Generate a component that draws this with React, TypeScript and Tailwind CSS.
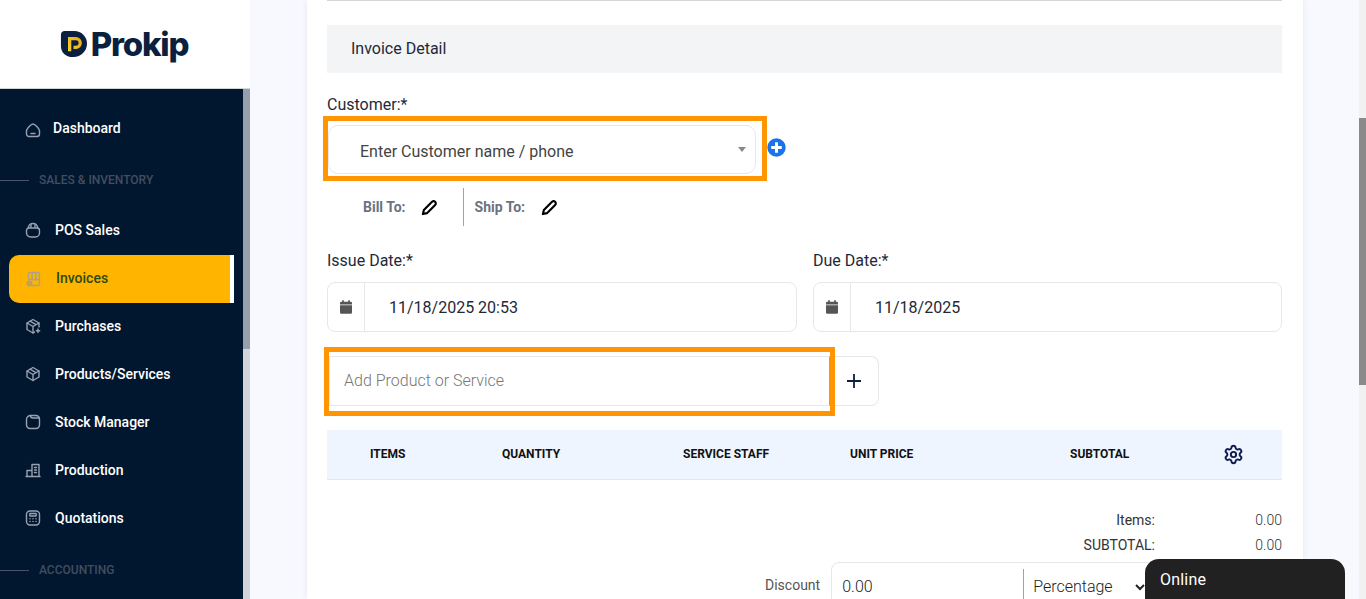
import React from "react";
import { Settings } from "lucide-react";

const Ico = ({ children, cls = "" }: { children: React.ReactNode; cls?: string }) => (
  <svg viewBox="0 0 16 16" fill="none" stroke="currentColor" strokeWidth="1.4" strokeLinecap="round" strokeLinejoin="round" className={"w-[16px] h-[16px] shrink-0 " + cls}>
    {children}
  </svg>
);

const Home = () => <Ico cls="w-[15px] h-[15px]"><path d="M1.500 8.500C2 6.500 6 2 8 2s6 4.500 6.500 6.500V12a2.500 2.500 0 0 1-2.500 2.500H4A2.500 2.500 0 0 1 1.500 12Z" /><path d="M6 11.500h4" /></Ico>;
const Pos = () => <Ico><path d="M1.500 8.500a2.500 2.500 0 0 1 2.500-2.500h8a2.500 2.500 0 0 1 2.500 2.500V11a4 4 0 0 1-4 4h-5a4 4 0 0 1-4-4Z" /><path d="M3 6.500C3.500 3.500 5.500 1.500 8 1.500s4.500 2 5 5" /><path d="M6 5.500V2.500M10 5.500V2.500" /></Ico>;
const Store = () => <Ico><path d="M2.500 7V3.500a2 2 0 0 1 2-2h7a2 2 0 0 1 2 2V7a1.800 1.800 0 0 1-3.600 0 1.800 1.800 0 0 1-3.800 0 1.800 1.800 0 0 1-3.600 0Z" /><path d="M6.100 1.500V7M9.900 1.500V7" /><path d="M13.500 8.500V12.500a2 2 0 0 1-2 2H6" /><circle cx="3.500" cy="12.500" r="2.300" /><path d="M3.500 11.500v2M2.500 12.500h2" /></Ico>;
const BoxPlus = () => <Ico><path d="M14 9V5L8 1.500 2 5v6.500L8 15l1.500-.9" /><path d="M2 5l6 3.500L14 5M8 8.500V15M5 3.200l6 3.500" /><path d="M13 11v3.500M11.300 12.700h3.400" /></Ico>;
const Box = () => <Ico><path d="M14 11V5L8 1.500 2 5v6l6 3.500Z" /><path d="M2 5l6 3.500L14 5M8 8.500v6M5 3.200l6 3.500" /></Ico>;
const Folder = () => <Ico><path d="M1.500 5.500A4 4 0 0 1 5.500 1.500H11a3.500 3.500 0 0 1 3.500 3.500v6a3.500 3.500 0 0 1-3.500 3.500H5a3.500 3.500 0 0 1-3.500-3.500Z" /><path d="M5.500 1.500c0 1.500 1 2.500 2.500 2.500h6.300" /></Ico>;
const Factory = () => <Ico><path d="M1 14.500h14M2 14.500V8.500h5v6M7 14.500V2.500h7v12" /><path d="M9.500 5.500h2M9.500 8h2M9.500 10.500h2" /></Ico>;
const Calc = () => <Ico><rect x="1.500" y="1" width="13" height="14" rx="3.500" /><rect x="4.800" y="3.500" width="6.400" height="2.500" rx=".5" /><path d="M5 8.800h.01M8 8.800h.01M11 8.800h.01M5 11.500h.01M8 11.500h.01M11 11.500h.01" strokeWidth="1.500" /></Ico>;

const Item = ({ icon, label }: { icon: React.ReactNode; label: string }) => (
  <div className="flex items-center pl-[25px] text-[#99a1b0] h-[48px]">
    {icon}
    <span className="ml-[14px] text-[14px] font-medium text-white leading-none">{label}</span>
  </div>
);

const Section = ({ label }: { label: string }) => (
  <div className="flex items-center h-[22px]">
    <div className="w-[29px] h-px bg-[#4a5568]" />
    <span className="ml-[10px] text-[12px] font-medium text-[#434d5f] leading-none">{label}</span>
  </div>
);

const Pencil = () => (
  <svg viewBox="0 0 16 16" className="w-[17px] h-[17px]" fill="none" stroke="#000" strokeWidth="2" strokeLinejoin="round" strokeLinecap="round">
    <path d="M1.800 14.200l.9-3.800 7.700-7.700a2 2 0 0 1 2.900 2.900l-7.700 7.700Z" />
  </svg>
);

const CalIcon = () => (
  <svg viewBox="0 0 448 512" className="w-[12px] h-[14px]" fill="#555">
    <path d="M96 0h32a16 16 0 0 1 16 16v48h160V16a16 16 0 0 1 16-16h32a16 16 0 0 1 16 16v48h32a48 48 0 0 1 48 48v48H0v-48a48 48 0 0 1 48-48h32V16A16 16 0 0 1 96 0ZM0 192h448v272a48 48 0 0 1-48 48H48a48 48 0 0 1-48-48Z" />
  </svg>
);

const Sidebar = () => (
  <aside className="w-[250px] shrink-0 h-full flex flex-col">
    <div className="h-[89px] bg-white border-b border-[#d4d6db] flex items-center justify-center shrink-0">
      <div className="flex items-center mt-[1px] ml-[-2px]">
        <svg viewBox="0 0 28 28" className="w-[27px] h-[27px] mt-[-3px]">
          <defs>
            <linearGradient id="pg" x1="0" y1="1" x2="1" y2="0">
              <stop offset="0" stopColor="#f2d22e" />
              <stop offset="1" stopColor="#f0a818" />
            </linearGradient>
          </defs>
          <path d="M5 1h10a13 13 0 0 1 13 13v0a14 14 0 0 1-14 14h-1C6 28 1 23 1 17V5a4 4 0 0 1 4-4Z" fill="#0b1f3f" />
          <path d="M10 22V9h6.500a4 4 0 0 1 0 9H14" fill="none" stroke="url(#pg)" strokeWidth="3.400" />
        </svg>
        <span className="ml-[4px] text-[33px] leading-none font-extrabold text-[#0b1f3f] tracking-[-1.2px]" style={{ fontFamily: "Inter, sans-serif" }}>Prokip</span>
      </div>
    </div>
    <div className="flex-1 flex min-h-0">
      <nav className="w-[243px] bg-[#00172f] overflow-hidden">
        <div className="h-[80px] flex items-center pl-[25px] text-[#99a1b0]">
          <span className="mt-[2px]"><Home /></span>
          <span className="ml-[12px] mt-[-2px] text-[14px] font-medium text-white leading-none">Dashboard</span>
        </div>
        <Section label="SALES & INVENTORY" />
        <div className="h-[15px]" />
        <Item icon={<Pos />} label="POS Sales" />
        <div className="mt-px mb-[-1px] ml-[9px] w-[225px] h-[48px] bg-[#ffb500] rounded-l-[10px] border-r-[4px] border-white flex items-center pl-[17px] text-[#a8a090]">
          <Store />
          <span className="ml-[14px] mt-[-2px] text-[14px] font-medium text-[#2d4a10] leading-none">Invoices</span>
        </div>
        <Item icon={<BoxPlus />} label="Purchases" />
        <Item icon={<Box />} label="Products/Services" />
        <Item icon={<Folder />} label="Stock Manager" />
        <Item icon={<Factory />} label="Production" />
        <Item icon={<Calc />} label="Quotations" />
        <div className="h-[17px]" />
        <Section label="ACCOUNTING" />
      </nav>
      <div className="w-[7px] bg-[#d2d4da]">
        <div className="h-[260px] bg-[#989eab]" />
      </div>
    </div>
  </aside>
);

const Th = ({ w, children }: { w: string; children: React.ReactNode }) => (
  <div className={"text-[12px] font-bold text-[#111] mt-[-1px] " + w}>{children}</div>
);

export default function App() {
  return (
    <div className="w-[1366px] h-[599px] overflow-hidden flex bg-[#f8f9ff] relative" style={{ fontFamily: "Roboto, sans-serif" }}>
      <Sidebar />
      <main className="flex-1 min-w-0 pl-[57px] pr-[63px]">
        <section className="bg-white h-full pl-[20px] pr-[21px] shadow-[0_0_6px_rgba(60,70,140,0.10)]">
          <div className="h-px bg-[#d5d6da]" />
          <div className="mt-[24px] h-[48px] bg-[#f3f4f6] flex items-center pl-[24px] text-[16px] text-[#1f2937]">Invoice Detail</div>

          <div className="mt-[22px] text-[16px] leading-[19px] text-[#1f2937]">Customer:*</div>
          <div className="flex items-start mt-[2px] ml-[-4px]">
            <div className="w-[444px] h-[65px] border-[5px] border-[#ff9500] flex">
              <div className="flex-1 mt-[4px] mb-[2px] mr-[6px] border border-[#e5e7eb] rounded-[10px] flex items-center pl-[31px] pr-[9px] text-[16px] text-[#444]">
                <span className="flex-1 mt-[4px]">Enter Customer name / phone</span>
                <span className="w-0 h-0 border-x-[4px] border-x-transparent border-t-[5px] border-t-[#888]" />
              </div>
            </div>
            <svg viewBox="0 0 512 512" className="w-[19px] h-[19px] mt-[22px]" fill="#1a73e8">
              <path d="M256 8a248 248 0 1 0 0 496 248 248 0 0 0 0-496Zm144 276a12 12 0 0 1-12 12h-92v92a12 12 0 0 1-12 12h-56a12 12 0 0 1-12-12v-92h-92a12 12 0 0 1-12-12v-56a12 12 0 0 1 12-12h92v-92a12 12 0 0 1 12-12h56a12 12 0 0 1 12 12v92h92a12 12 0 0 1 12 12Z" />
            </svg>
          </div>
          <div className="flex items-center h-[38px] mt-[7px] text-[14px] font-bold text-[#6b7280]">
            <span className="ml-[36px] leading-none">Bill To:</span>
            <span className="ml-[15px]"><Pencil /></span>
            <span className="ml-[25px] w-px h-[38px] bg-[#9ca3af]" />
            <span className="ml-[11px] leading-none">Ship To:</span>
            <span className="ml-[16px]"><Pencil /></span>
          </div>

          <div className="mt-[25px] flex">
            <div className="w-[470px]">
              <div className="text-[16px] leading-[19px] text-[#1f2937]">Issue Date:*</div>
              <div className="mt-[12px] h-[50px] border border-[#e5e7eb] rounded-[8px] flex items-center">
                <div className="w-[37px] h-full border-r border-[#e5e7eb] flex items-center justify-center"><CalIcon /></div>
                <span className="ml-[24px] mt-[2px] text-[16px] text-[#1f2937]">11/18/2025 20:53</span>
              </div>
            </div>
            <div className="ml-[16px] w-[469px]">
              <div className="text-[16px] leading-[19px] text-[#1f2937]">Due Date:*</div>
              <div className="mt-[12px] h-[50px] border border-[#e5e7eb] rounded-[8px] flex items-center">
                <div className="w-[37px] h-full border-r border-[#e5e7eb] flex items-center justify-center"><CalIcon /></div>
                <span className="ml-[24px] mt-[2px] text-[16px] text-[#1f2937]">11/18/2025</span>
              </div>
            </div>
          </div>

          <div className="mt-[15px] ml-[-3px] flex items-start">
            <div className="w-[511px] h-[69px] border-[5px] border-[#ff9500] flex">
              <div className="flex-1 mt-[4px] mb-[5px] border border-[#e5e7eb] border-r-[#9ca3af] flex items-center pl-[14px] text-[16px] font-light text-[#777]">
                <span>Add Product or Service</span>
              </div>
            </div>
            <div className="mt-[9px] w-[44px] h-[50px] border-y border-r border-[#e5e7eb] rounded-r-[8px] flex items-center justify-center pr-[6px]">
              <svg viewBox="0 0 16 16" className="w-[16px] h-[16px]" stroke="#0b1f3f" strokeWidth="1.800"><path d="M8 1v14M1 8h14" /></svg>
            </div>
          </div>

          <div className="mt-[14px] h-[50px] bg-[#eef5fe] border-b border-[#e5e7eb] flex items-center">
            <Th w="ml-[43px] w-[132px]">ITEMS</Th>
            <Th w="w-[181px]">QUANTITY</Th>
            <Th w="w-[167px]">SERVICE STAFF</Th>
            <Th w="w-[220px]">UNIT PRICE</Th>
            <Th w="w-[153px]">SUBTOTAL</Th>
            <Settings className="w-[21px] h-[21px] text-[#0f1a52]" strokeWidth={2.2} />
          </div>

          <div className="mt-[31px] flex justify-end text-[14px] leading-[19px] text-[#333]">
            <span>Items:</span><span className="w-[127px] text-right font-light">0.00</span>
          </div>
          <div className="mt-[6px] flex justify-end text-[14px] leading-[19px] text-[#333]">
            <span>SUBTOTAL:</span><span className="w-[127px] text-right font-light">0.00</span>
          </div>
          <div className="mt-[7px] flex items-start">
            <span className="ml-[438px] mt-[14px] text-[14px] leading-[19px] text-[#555]">Discount</span>
            <div className="ml-[11px] w-[400px] h-[60px] border border-[#e5e7eb] rounded-[8px] flex items-start">
              <span className="ml-[10px] mt-[12px] w-[181px] text-[16px] font-light text-[#222]">0.00</span>
              <div className="mt-[6px] h-[50px] border-l border-[#9ca3af] pl-[9px] pt-[6px] text-[16px] font-light text-[#222] flex items-start">
                <span>Percentage</span>
                <svg viewBox="0 0 12 12" className="w-[12px] h-[12px] ml-[21px] mt-[6px]" fill="none" stroke="#222" strokeWidth="2"><path d="M2 4l4 4 4-4" /></svg>
              </div>
            </div>
          </div>
        </section>
      </main>
      <div className="w-[7px] absolute right-0 top-0 bottom-0 bg-[#f1f1f1]">
        <div className="mt-[118px] h-[267px] bg-[#8a8a8a]" />
      </div>
      <div className="absolute left-[1145px] top-[559px] w-[200px] h-[60px] bg-[#212121] rounded-t-[14px] pl-[15px] pt-[11px] text-[16px] leading-[19px] tracking-[0.2px] text-white">Online</div>
    </div>
  );
}
